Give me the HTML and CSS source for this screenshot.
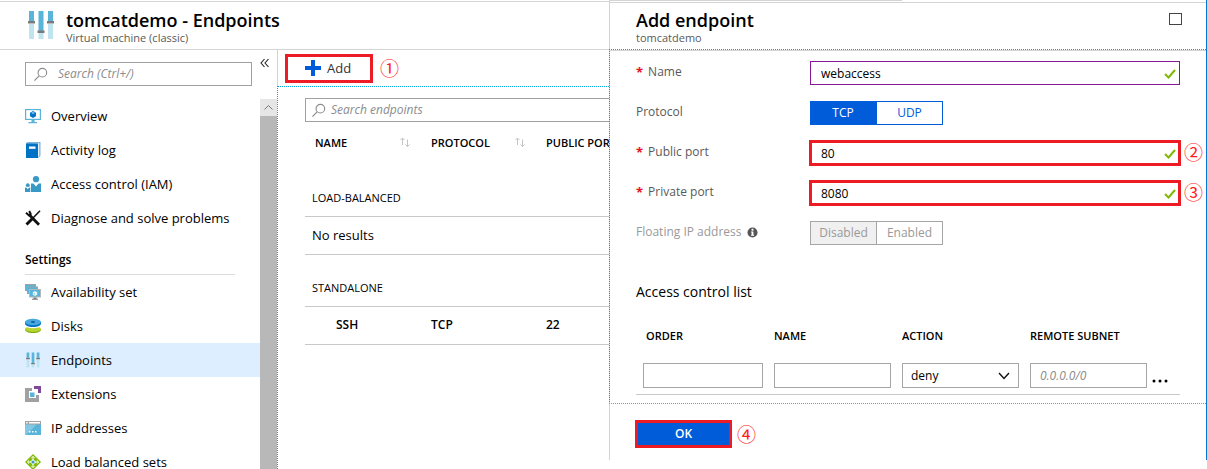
FILE: index.html
```html
<!DOCTYPE html>
<html lang="en">
<head>
<meta charset="utf-8">
<title>tomcatdemo - Endpoints</title>
<link rel="stylesheet" href="styles.css">
</head>
<body>
<svg class="defs" aria-hidden="true">
  <symbol id="sliders" viewBox="0 0 26 30">
    <path fill="#bfe4f0" d="M1 14h5v15H1zM10.500 23h5v6h-5zM20 14h5v15h-5z"/>
    <path fill="#59b4d9" d="M1 1h5v10H1zM10.500 1h5v20h-5zM20 1h5v10h-5z"/>
    <path fill="#7a7a7a" d="M0 11h7v2.500H0zM9.500 20.500h7V23h-7zM19 11h7v2.500h-7z"/>
  </symbol>
  <symbol id="lens" viewBox="0 0 16 16">
    <circle cx="10" cy="6" r="4.600" fill="none" stroke="currentColor" stroke-width="1.200"/>
    <path d="M6.500 9.500 1.500 14.500" fill="none" stroke="currentColor" stroke-width="1.300"/>
  </symbol>
  <symbol id="check" viewBox="0 0 12 10">
    <path d="M1 5l3.500 3.500L11 1" fill="none" stroke="#7fba00" stroke-width="2"/>
  </symbol>
  <symbol id="sort" viewBox="0 0 12 10">
    <path d="M3.500 8V1M1.500 3l2-2 2 2M8.500 2.500v7M6.500 7.500l2 2 2-2" fill="none" stroke="#c4c4c4"/>
  </symbol>
</svg>
<div class="app">
  <main class="blade">
    <header class="blade-head">
      <svg class="blade-icon"><use href="#sliders"/></svg>
      <div>
        <h1>tomcatdemo - Endpoints</h1>
        <p>Virtual machine (classic)</p>
      </div>
    </header>
    <div class="blade-body">
      <nav class="menu" aria-label="Resource menu">
        <div class="menu-top">
          <label class="search">
            <svg class="lens"><use href="#lens"/></svg>
            <input type="search" placeholder="Search (Ctrl+/)" aria-label="Search menu">
          </label>
          <button class="collapse" aria-label="Collapse menu">
            <svg viewBox="0 0 10 10"><path d="M4.500 1 1 5l3.500 4M8.500 1 5 5l3.500 4" fill="none" stroke="#222" stroke-width="1.100"/></svg>
          </button>
        </div>
        <div class="menu-scroll">
          <div class="menu-list">
            <a href="#overview"><svg viewBox="0 0 16 16"><path fill="#59b4d9" d="M0 1h16v11H0z"/><path fill="#fff" d="M1.200 2.200h13.600v8.600H1.200z"/><path fill="#0072c6" d="M8 3l3 1.700v3.500L8 10 5 8.200V4.700z"/><path fill="#7fc3ee" d="M8 3.800l2 1.100-2 1.100-2-1.100z"/><path fill="#59b4d9" d="M6.500 12h3v2H12v1.200H3.500V14h3z"/></svg>Overview</a>
            <a href="#activity"><svg viewBox="0 0 16 16"><path fill="#7fb4dd" d="M1 1l2-1h12.500v14L13 16z"/><path fill="#fff" d="M2.500 1.200h11.700V14l-1 .8V1.700z"/><path fill="#0072c6" d="M1 1.500h12V16H1z"/><path fill="#fff" d="M4 4.500h6.500v2.300H4z"/></svg>Activity log</a>
            <a href="#iam"><svg viewBox="0 0 16 16" fill="#3999c6"><circle cx="11" cy="3.200" r="3.100"/><path d="M6 7.500h2.500L11 10.500l2.500-3H16V16H6z"/><circle cx="2.800" cy="9.200" r="1.900"/><path d="M0 11.500h1.300l1.500 1.600 1.500-1.600h1V16H0z"/></svg>Access control (IAM)</a>
            <a href="#diagnose"><svg viewBox="0 0 16 16" fill="none" stroke="#111"><path stroke-width="2.800" d="M4.500 5 14 14.800"/><path stroke-width="2" d="M1 2.800l2.800 2.500L5.700 4 4.200 1"/><path stroke-width="1.500" d="M15 .8 8 8"/><path stroke-width="3" d="M7 9 1.500 14.500"/></svg>Diagnose and solve problems</a>
            <h2>Settings</h2>
            <a href="#availability"><svg viewBox="0 0 16 16"><path fill="#a0a1a2" d="M0 0h11v7H0z"/><path fill="#59b4d9" d="M1 1h9v5H1z"/><path fill="#a0a1a2" d="M2 2.500h11V10H2z"/><path fill="#59b4d9" d="M3 3.500h9v6H3z"/><path fill="#b5b7b8" d="M4 5h12v8.500H4z"/><path fill="#59b4d9" d="M5 6h10v6.500H5z"/><path fill="#e8f6fb" d="M10 7l2.200 1.200v2.500L10 12l-2.200-1.300V8.200z"/><path fill="#59b4d9" d="M8.300 8.700l1.500.8v1.500M10.500 8.500l1-.5"/><path fill="#7a7a7a" d="M8.500 13.500h3v1.300H13v1H7v-1h1.500z"/></svg>Availability set</a>
            <a href="#disks"><svg viewBox="0 0 16 16"><path fill="#7aa800" d="M0 11h16v.5c0 2-3.500 3.500-8 3.500s-8-1.500-8-3.500z"/><ellipse cx="8" cy="11" rx="8" ry="3" fill="#b8d432"/><path fill="#fff" d="M0 6.500h16v1.200c-2 1.800-4.500 2.500-8 2.500s-6-.7-8-2.500z"/><path fill="#0072c6" d="M0 4h16v1.500C16 7.500 12.500 9 8 9S0 7.500 0 5.500z"/><ellipse cx="8" cy="4" rx="8" ry="3.300" fill="#48a8df"/><ellipse cx="8" cy="4" rx="2.200" ry=".9" fill="#0864a8"/></svg>Disks</a>
            <a href="#endpoints" class="current" aria-current="page"><svg><use href="#sliders"/></svg>Endpoints</a>
            <a href="#extensions"><svg viewBox="0 0 16 16"><path fill="#a0a1a2" d="M0 2h7v3H4v7h7V9h3v7H0z"/><path fill="#804998" d="M9 0h7v7h-3V3H9z"/><path fill="#59b4d9" d="M5 6.500h4.500V11H5z"/></svg>Extensions</a>
            <a href="#ip"><svg viewBox="0 0 16 16"><path fill="#59b4d9" d="M0 1h16v14H0z"/><path fill="#82c7e4" d="M0 4h12L1 15H0z"/><path fill="#a0a1a2" d="M0 1h16v3.500H0z"/><path fill="#fff" d="M4 2h11v1.500H4zM1.200 2h1.500v1.500H1.200zM4 11h1.500v1.500H4zM7 11h1.500v1.500H7zM10 11h1.500v1.500H10z"/></svg>IP addresses</a>
            <a href="#balanced"><svg viewBox="0 0 16 16"><path fill="#7fba00" d="M8 0l8 8-8 8-8-8z"/><path fill="none" stroke="#fff" d="M8 3v10M3 8h10M6.300 4.200 8 2.300l1.700 1.900M6.300 11.800 8 13.700l1.700-1.900M4.200 6.300 2.300 8l1.900 1.700M11.800 6.300 13.700 8l-1.900 1.700"/><path fill="#fff" d="M8 5l3 3-3 3-3-3z"/><circle cx="8" cy="8" r="1.600" fill="#3999c6"/></svg>Load balanced sets</a>
          </div>
          <div class="scrollbar" aria-hidden="true">
            <svg viewBox="0 0 17 17"><path d="M4.500 10.500l4-4 4 4" fill="none" stroke="#777"/></svg>
          </div>
        </div>
      </nav>
      <section class="content">
        <div class="commands">
          <button class="add"><svg viewBox="0 0 16 16"><path fill="#015cda" d="M6 0h4v6h6v4h-6v6H6v-6H0V6h6z"/></svg>Add</button>
          <span class="step">①</span>
        </div>
        <div class="results">
          <label class="search wide">
            <svg class="lens"><use href="#lens"/></svg>
            <input type="search" placeholder="Search endpoints" aria-label="Search endpoints">
          </label>
          <table class="endpoints">
            <thead>
              <tr>
                <th scope="col">NAME<svg><use href="#sort"/></svg></th>
                <th scope="col">PROTOCOL<svg><use href="#sort"/></svg></th>
                <th scope="col">PUBLIC PORT</th>
              </tr>
            </thead>
            <tbody>
              <tr class="group"><td colspan="3">LOAD-BALANCED</td></tr>
              <tr><td colspan="3" class="none">No results</td></tr>
              <tr class="group"><td colspan="3">STANDALONE</td></tr>
              <tr class="item"><td>SSH</td><td>TCP</td><td>22</td></tr>
            </tbody>
          </table>
        </div>
      </section>
    </div>
  </main>
  <aside class="panel">
    <header class="panel-head">
      <div>
        <h1>Add endpoint</h1>
        <p>tomcatdemo</p>
      </div>
      <button class="maximize" aria-label="Maximize"></button>
    </header>
    <form class="panel-form">
      <div class="field">
        <label for="name"><b>*</b>Name</label>
        <div class="box named"><input id="name" type="text" value="webaccess"><svg><use href="#check"/></svg></div>
      </div>
      <div class="field">
        <span class="caption">Protocol</span>
        <div class="toggle"><button type="button" class="on">TCP</button><button type="button">UDP</button></div>
      </div>
      <div class="field">
        <label for="public"><b>*</b>Public port</label>
        <div class="box marked"><input id="public" type="text" value="80"><svg><use href="#check"/></svg><span class="step">②</span></div>
      </div>
      <div class="field">
        <label for="private"><b>*</b>Private port</label>
        <div class="box marked"><input id="private" type="text" value="8080"><svg><use href="#check"/></svg><span class="step">③</span></div>
      </div>
      <div class="field muted">
        <span class="caption">Floating IP address <svg viewBox="0 0 12 12"><circle cx="6" cy="6" r="5.500" fill="#555"/><path fill="#fff" d="M5 2h2v2H5zM4.500 5H7v3.500h.7v1H4.400v-1H5V6h-.5z"/></svg></span>
        <div class="toggle"><button type="button" class="on" disabled>Disabled</button><button type="button" disabled>Enabled</button></div>
      </div>
      <h2>Access control list</h2>
      <table class="acl">
        <thead>
          <tr><th scope="col">ORDER</th><th scope="col">NAME</th><th scope="col">ACTION</th><th scope="col">REMOTE SUBNET</th><th></th></tr>
        </thead>
        <tbody>
          <tr>
            <td><input type="text" aria-label="Order"></td>
            <td><input type="text" aria-label="Rule name"></td>
            <td><div class="select"><select aria-label="Action"><option>deny</option></select><svg viewBox="0 0 12 8"><path d="M1 1l5 5.500L11 1" fill="none" stroke="#111" stroke-width="1.400"/></svg></div></td>
            <td><input type="text" placeholder="0.0.0.0/0" aria-label="Remote subnet"></td>
            <td><button type="button" class="more" aria-label="More"><svg viewBox="0 0 16 4"><circle cx="2" cy="2" r="1.500"/><circle cx="8" cy="2" r="1.500"/><circle cx="14" cy="2" r="1.500"/></svg></button></td>
          </tr>
        </tbody>
      </table>
    </form>
    <footer class="panel-foot">
      <button class="ok">OK</button>
      <span class="step">④</span>
    </footer>
  </aside>
</div>
</body>
</html>
```

FILE: styles.css
```css
* {
  box-sizing: border-box;
}

body {
  margin: 0;
  background: #fff;
  color: #000;
  font: 13px/18px "Open Sans", "Noto Sans", sans-serif;
}

h1,
h2,
p {
  margin: 0;
}

button,
input,
select {
  margin: 0;
  padding: 0;
  border: 0;
  border-radius: 0;
  background: none;
  color: inherit;
  font: inherit;
}

svg {
  display: block;
  flex: none;
}

input::placeholder {
  color: #8c8c8c;
  font-style: italic;
  opacity: 1;
}

.defs {
  position: absolute;
  width: 0;
  height: 0;
}

.app {
  display: grid;
  grid-template-columns: minmax(0, 609fr) minmax(0, 598fr);
  grid-template-rows: minmax(0, 1fr);
  height: 100vh;
  overflow: hidden;
}

.blade {
  display: flex;
  flex-direction: column;
  padding-top: 1px;
  overflow: hidden;
}

.blade-head {
  display: flex;
  flex: none;
  gap: 12px;
  height: 49px;
  padding: 8px 28px 0;
  border: solid #d4d4d4;
  border-width: 1px 0;
}

.blade-icon {
  width: 26px;
  height: 30px;
}

h1 {
  font-size: 18px;
  font-weight: 600;
  line-height: 20px;
}

header p {
  color: #595959;
  font-size: 11px;
  line-height: 16px;
}

.blade-body {
  display: flex;
  flex: 1;
  min-height: 0;
}

.menu {
  display: flex;
  flex: none;
  flex-direction: column;
  width: 277px;
}

.menu-top {
  display: flex;
  flex: none;
  align-items: flex-start;
  gap: 8px;
  height: 49px;
  padding: 12px 7px 0 25px;
}

.search {
  display: flex;
  flex: 1;
  align-items: center;
  gap: 10px;
  height: 24px;
  padding: 0 7px;
  border: 1px solid #a0a0a0;
  color: #8c8c8c;
}

.search input {
  flex: 1;
  min-width: 0;
  outline: 0;
  font-size: 12px;
}

.lens {
  width: 15px;
  height: 15px;
}

.collapse svg {
  width: 10px;
  height: 10px;
  margin-top: -4px;
}

.menu-scroll {
  display: flex;
  flex: 1;
  min-height: 0;
}

.menu-list {
  flex: 1;
  overflow: hidden;
}

.menu-list a {
  display: flex;
  align-items: center;
  gap: 10px;
  height: 34px;
  padding-left: 25px;
  color: #000;
  text-decoration: none;
}

.menu-list svg {
  width: 16px;
  height: 16px;
}

.menu-list .current {
  background: #dceeff;
}

.menu-list h2 {
  margin: 0 25px;
  padding: 16px 0 5px;
  border-bottom: 1px solid #dcdcdc;
  font-size: 12px;
  font-weight: 600;
}

.scrollbar {
  width: 17px;
  background: #b8b8b8;
}

.scrollbar svg {
  width: 17px;
  height: 17px;
  background: #e6e6e6;
}

.content {
  display: flex;
  flex: 1;
  flex-direction: column;
  min-width: 0;
}

.commands {
  display: flex;
  flex: none;
  align-items: center;
  gap: 7px;
  height: 36px;
  padding-left: 7px;
  border-left: 1px solid #d4d4d4;
}

.add {
  display: flex;
  align-items: center;
  gap: 6px;
  width: 88px;
  height: 29px;
  padding-left: 17px;
  border: 3px solid #ed1c24;
  color: #333;
}

.add svg {
  width: 16px;
  height: 16px;
}

.step {
  color: #ff1a1a;
  font: 19px/20px "Noto Sans CJK SC", sans-serif;
}

.results {
  flex: 1;
  min-height: 0;
  padding: 11px 0 0 27px;
  border: 1px dotted #00a8e0;
  border-width: 1px 0 0 1px;
  overflow: hidden;
}

.search.wide {
  gap: 5px;
  padding: 0 5px;
  border-right: 0;
}

table {
  width: 100%;
  border-collapse: collapse;
  table-layout: fixed;
}

th {
  font-size: 11px;
  font-weight: 600;
  text-align: left;
  white-space: nowrap;
}

td {
  padding: 0;
}

.endpoints th {
  position: relative;
  height: 42px;
  padding: 0 0 0 10px;
}

.endpoints th svg {
  position: absolute;
  top: 15px;
  right: 10px;
  width: 12px;
  height: 10px;
}

.endpoints th:first-child {
  width: 116px;
}

.endpoints th:nth-child(2) {
  width: 115px;
}

.endpoints td {
  height: 38px;
  padding-left: 10px;
  border-bottom: 1px solid #c8c8c8;
}

.endpoints .group td {
  height: 52px;
  padding: 16px 0 0 7px;
  font-size: 11px;
}

.endpoints .none {
  padding-left: 7px;
}

.endpoints .item {
  font-size: 12px;
  font-weight: 600;
}

.endpoints .item td:first-child {
  padding-left: 31px;
}

.panel {
  display: flex;
  flex-direction: column;
  margin-bottom: 9px;
  padding-top: 2px;
  border: solid #d4d4d4;
  border-width: 0 1px 0 1px;
  border-right-color: #0078d4;
  background: linear-gradient(#d4d4d4, #d4d4d4) 0 0 / 49% 1px no-repeat;
}

.panel-head {
  display: flex;
  flex: none;
  justify-content: space-between;
  height: 47px;
  padding: 7px 24px 0 26px;
  border-top: 1px solid #d4d4d4;
}

.maximize {
  width: 13px;
  height: 12px;
  margin-top: 3px;
  border: 1px solid #444;
}

.panel-form {
  flex: none;
  margin-left: -1px;
  padding: 11px 26px 8px;
  border: 1px dotted #00a8e0;
  border-width: 1px 0 1px 1px;
  border-bottom-color: #6f9fb4;
  background: linear-gradient(#d4d4d4, #d4d4d4) 0 0 / 100% 1px no-repeat padding-box;
}

.field {
  display: grid;
  grid-template-columns: 174px minmax(0, 1fr);
  align-items: start;
  height: 40px;
}

.field label,
.caption {
  display: flex;
  gap: 5px;
  align-items: center;
  height: 22px;
  color: #595959;
  font-size: 12px;
}

.field b {
  color: #e81123;
  font-size: 13px;
}

.caption svg {
  width: 11px;
  height: 11px;
}

.box {
  position: relative;
  height: 24px;
}

.box input {
  width: 100%;
  height: 100%;
  padding: 0 30px 0 10px;
  border: 1px solid #881798;
  font-size: 12px;
  outline: 0;
}

.box > svg {
  position: absolute;
  top: 8px;
  right: 4px;
  width: 12px;
  height: 10px;
}

.marked input {
  border-color: transparent;
  outline: 3px solid #ed1c24;
  outline-offset: -2px;
}

.box .step {
  position: absolute;
  top: 1px;
  left: calc(100% + 4px);
}

.toggle {
  display: grid;
  grid-template-columns: 67px 66px;
  height: 24px;
}

.toggle button {
  border: 1px solid #015cda;
  border-left: 0;
  color: #015cda;
  font-size: 12px;
}

.toggle .on {
  background: #015cda;
  color: #fff;
}

.muted .caption {
  color: #999;
}

.muted .toggle button {
  border: 1px solid #a6a6a6;
  border-left-width: 0;
  color: #999;
}

.muted .toggle .on {
  border-left-width: 1px;
  background: #f0f0f0;
}

.panel-form h2 {
  padding-top: 21px;
  font-size: 14px;
  font-weight: 400;
  line-height: 20px;
}

.acl {
  border-bottom: 1px solid #c8c8c8;
}

.acl th {
  height: 61px;
  padding: 7px 0 0;
}

.acl th:first-child {
  width: 138px;
  padding-left: 10px;
}

.acl th:nth-child(n + 2) {
  width: 128px;
}

.acl th:last-child {
  width: auto;
}

.acl td {
  padding: 0 11px 6px 0;
}

.acl td:first-child {
  padding-left: 7px;
}

.acl td:last-child {
  padding-right: 0;
}

.acl input,
.acl select {
  display: block;
  width: 100%;
  height: 25px;
  padding: 0 9px;
  border: 1px solid #a6a6a6;
  font-size: 12px;
}

.acl select {
  appearance: none;
  padding: 0 8px;
}

.select {
  position: relative;
}

.select svg {
  position: absolute;
  top: 9px;
  right: 9px;
  width: 12px;
  height: 8px;
}

.acl td:last-child {
  padding-left: 0;
}

.more {
  display: block;
  margin-left: -6px;
}

.more svg {
  width: 16px;
  height: 4px;
  margin-top: 10px;
}

.panel-foot {
  display: flex;
  gap: 5px;
  padding: 16px 26px 0 25px;
  align-items: center;
}

.ok {
  width: 97px;
  height: 28px;
  border: 3px solid #ed1c24;
  background: #015cda;
  color: #fff;
  font-size: 12px;
  font-weight: 600;
}
```
